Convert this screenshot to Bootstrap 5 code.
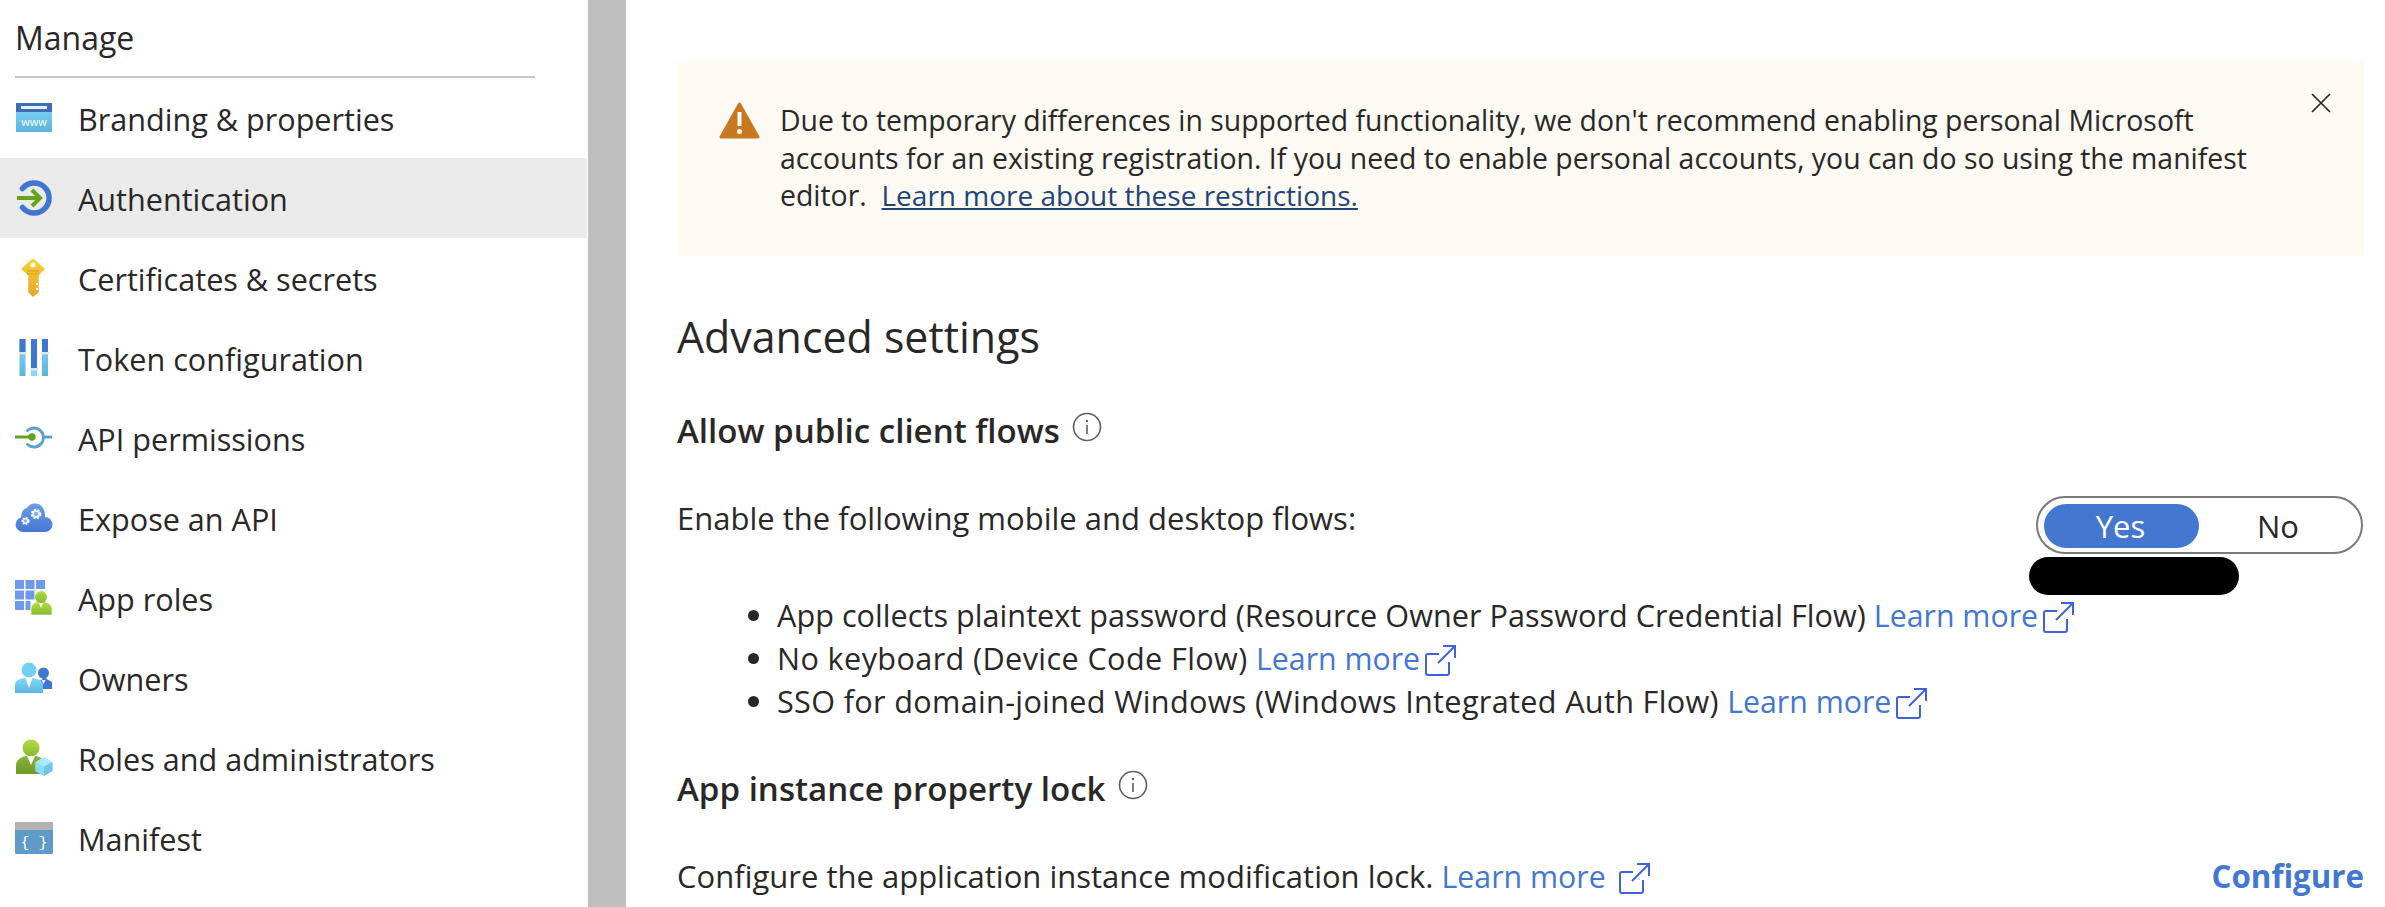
<!DOCTYPE html>
<html lang="en">
<head>
    <meta charset="UTF-8">
    <title>Authentication</title>
    <link href="https://cdn.jsdelivr.net/npm/bootstrap@5.3.0/dist/css/bootstrap.min.css" rel="stylesheet">
    <style>
        html, body { height: 907px; overflow: hidden; }
        body { font-family: "Open Sans", "Liberation Sans", sans-serif; font-size: 31px; color: #292827; background: #fff; }
        a { color: #4477d0; text-decoration: none; }
        .page-wrap { height: 907px; }
        .side-menu { width: 587px; flex: none; }
        .side-title { margin: 0 52px 0 15px; height: 78px; line-height: 76px; font-size: 32px; font-weight: 500; color: #292827; border-bottom: 2px solid #c8c8c8; }
        .side-item { height: 80px; padding: 0 0 0 15px; gap: 25px; border: 0; border-radius: 0; font-size: 30.6px; color: #292827; background: transparent; }
        .side-item span { position: relative; top: 2px; }
        .side-item.picked { background: #ebeaea; }
        .side-item svg { width: 38px; height: 38px; flex: none; }
        .split-bar { width: 38px; margin-left: 1px; background: #bebebe; flex: none; }
        .main-pane { width: 1759px; padding: 60px 21px 0 51px; flex: none; }
        .warn-box { height: 196px; margin: 0; padding: 42px 0 0 42px; gap: 20px; border: 0; border-radius: 4px; background: #fdf9f3; color: #292827; font-size: 28.4px; line-height: 37.5px; white-space: nowrap; }
        .warn-box a { color: #1f4479; font-size: 28px; text-decoration: underline; }
        .warn-icon { width: 41px; height: 37px; flex: none; }
        .warn-close { width: 22px; height: 22px; margin: -10.5px 32px 0 auto; flex: none; }
        .big-head { margin: 53px 0 0; font-size: 42.9px; line-height: 56px; font-weight: 400; color: #292827; }
        .sub-head { margin: 44px 0 0; font-size: 33.1px; line-height: 44px; font-weight: 600; color: #292827; }
        .sub-head svg { width: 30px; height: 30px; margin: -14px 0 0 4px; }
        .flow-row { margin-top: 43px; line-height: 43px; }
        .flow-text { margin-top: 1px; }
        .flow-list { margin: -1px 0 0; padding-left: 100px; font-size: 30.6px; line-height: 43px; white-space: nowrap; }
        .flow-list a, .flow-text a { font-size: 30.3px; letter-spacing: 0; }
        .flow-list li:nth-child(1) { letter-spacing: .04px; }
        .flow-list li:nth-child(2) { letter-spacing: .4px; }
        .flow-list li:nth-child(3) { letter-spacing: .34px; }
        .ext-icon { width: 32px; height: 32px; margin-left: 4px; vertical-align: -6px; }
        .yes-no { width: 327px; height: 58px; padding: 6px; border: 2px solid #7a7a7a; border-radius: 29px; margin-right: 1px; }
        .yes-no .btn { height: 44px; width: 155px; padding: 0; font-size: 31px; line-height: 44px; border: 0; border-radius: 22px; }
        .yes-no .btn-primary { background: #4477d0; color: #fff; padding-right: 2px; }
        .yes-no .btn-light { background: transparent; color: #292827; flex-grow: 1; padding-left: 2px; }
        .hidden-blob { width: 210px; height: 38px; margin: 3px 0 0 -7px; border-radius: 19px; background: #000; }
        .blue-strong { font-weight: 700; font-size: 31.3px; color: #4477d0; margin-top: 1px; }
        .last-row { margin-top: 43px; }
    </style>
</head>
<body>
<svg width="0" height="0" class="position-absolute">
    <defs>
        <linearGradient id="gLight" x1="0" y1="0" x2="0" y2="1"><stop offset="0" stop-color="#80d8f8"/><stop offset="1" stop-color="#5cb4dc"/></linearGradient>
        <linearGradient id="gCloud" x1="0" y1="0" x2="0" y2="1"><stop offset="0" stop-color="#6f9eea"/><stop offset="1" stop-color="#4477d4"/></linearGradient>
        <linearGradient id="gGreen" x1="0" y1="0" x2="0" y2="1"><stop offset="0" stop-color="#b6dc48"/><stop offset="1" stop-color="#86ba2e"/></linearGradient>
        <linearGradient id="gOlive" x1="0" y1="0" x2="0" y2="1"><stop offset="0" stop-color="#8cb43a"/><stop offset="1" stop-color="#6f9a28"/></linearGradient>
        <linearGradient id="gKey" x1="0" y1="0" x2="0" y2="1"><stop offset="0" stop-color="#f9d233"/><stop offset="1" stop-color="#e7a52c"/></linearGradient>
        <symbol id="extLink" viewBox="0 0 32 32">
            <path d="M15 10H4a2 2 0 0 0-2 2v17a2 2 0 0 0 2 2h19a2 2 0 0 0 2-2V18" fill="none" stroke="#3f62d8" stroke-width="2"/>
            <path d="M14 19 31 2M19 2h12v12" fill="none" stroke="#3f62d8" stroke-width="2"/>
        </symbol>
        <symbol id="infoDot" viewBox="0 0 30 30">
            <circle cx="15" cy="15" r="13.5" fill="none" stroke="#605e5c" stroke-width="1.6"/>
            <path d="M15 13v9" stroke="#605e5c" stroke-width="1.6"/><circle cx="15" cy="9" r="1.2" fill="#605e5c"/>
        </symbol>
    </defs>
</svg>
<div class="page-wrap d-flex">
    <aside class="side-menu">
        <div class="side-title">Manage</div>
        <div class="list-group">
            <a href="#" class="list-group-item side-item d-flex align-items-center">
                <svg viewBox="0 0 38 38"><rect x="1" y="4" width="36" height="29" fill="url(#gLight)"/><rect x="1" y="4" width="36" height="9" fill="#3d6cb5"/><rect x="6" y="7" width="26" height="3" fill="#e8eef6"/><text x="19" y="27" font-size="11" fill="#fff" text-anchor="middle" font-family="Open Sans">www</text></svg>
                <span>Branding &amp; properties</span>
            </a>
            <a href="#" class="list-group-item side-item picked d-flex align-items-center">
                <svg viewBox="0 0 38 38"><path d="M7.500 9.500A15 15 0 1 1 7.500 28.500" fill="none" stroke="#4076cf" stroke-width="5.500" stroke-linecap="round"/><path d="M2 19h23M17 11l8 8-8 8" fill="none" stroke="#65a31c" stroke-width="4"/></svg>
                <span>Authentication</span>
            </a>
            <a href="#" class="list-group-item side-item d-flex align-items-center">
                <svg viewBox="0 0 38 38"><path d="M18 0l11 10-6 6v17l-5 4-4-4V16L7 10z" fill="url(#gKey)" stroke="url(#gKey)" stroke-width="1.500" stroke-linejoin="round"/><circle cx="18" cy="6" r="2.500" fill="#fff"/><path d="M12 12h12M12 15h12" stroke="#e5a72c" stroke-width="1.300"/><path d="M23 24h-2v2h2M23 29h-2v2h2" fill="#fff"/></svg>
                <span>Certificates &amp; secrets</span>
            </a>
            <a href="#" class="list-group-item side-item d-flex align-items-center">
                <svg viewBox="0 0 38 38"><rect x="4.500" width="6" height="37" fill="url(#gLight)"/><rect x="16" width="6" height="37" fill="#80daf8"/><rect x="27" width="6" height="37" fill="url(#gLight)"/><rect x="4.500" width="6" height="14" fill="#4076cf"/><rect x="16" width="6" height="30" fill="#4076cf"/><rect x="27" width="6" height="14" fill="#4076cf"/><rect x="3.500" y="13" width="8" height="2.500" fill="#e4e4e4"/><rect x="15" y="29" width="8" height="2.500" fill="#e4e4e4"/><rect x="26" y="13" width="8" height="2.500" fill="#e4e4e4"/></svg>
                <span>Token configuration</span>
            </a>
            <a href="#" class="list-group-item side-item d-flex align-items-center">
                <svg viewBox="0 0 38 38"><path d="M12.500 11.500A9.500 9.500 0 1 1 12.500 25.500" fill="none" stroke="#5ea0cf" stroke-width="3" stroke-linecap="round"/><path d="M27 18h10" stroke="#5ea0cf" stroke-width="3"/><path d="M0 18h17" stroke="#65a31c" stroke-width="3"/><circle cx="17" cy="18" r="3.700" fill="#65a31c"/></svg>
                <span>API permissions</span>
            </a>
            <a href="#" class="list-group-item side-item d-flex align-items-center">
                <svg viewBox="0 0 38 38"><path d="M8 33a7.500 7.500 0 0 1-2-14.700C7 12 8 10 12 9c2-5 12-7 16 0 2 3 2 6 2 9a7.500 7.500 0 0 1 0 15z" fill="url(#gCloud)"/><circle cx="21" cy="15" r="4" fill="#dfe9fb" stroke="#fff" stroke-width="2.400" stroke-dasharray="2 1.300"/><circle cx="21" cy="15" r="2" fill="#7fa6e8"/><circle cx="10.500" cy="22" r="3" fill="#dfe9fb" stroke="#fff" stroke-width="2" stroke-dasharray="1.700 1.100"/><circle cx="10.500" cy="22" r="1.400" fill="#7fa6e8"/></svg>
                <span>Expose an API</span>
            </a>
            <a href="#" class="list-group-item side-item d-flex align-items-center">
                <svg viewBox="0 0 38 38"><path d="M0 1h9v9H0zM10.500 1h9v9h-9zM21 1h9v9h-9zM0 11.500h9v9H0zM10.500 11.500h9v9h-9zM0 22h9v9H0zM10.500 22h5v9h-5z" fill="#6f9aea"/><path d="M16 36v-6c0-4 3-6 5-7h10c3 1 6 3 6 7v6z" fill="url(#gGreen)" stroke="#fff" stroke-width=".6"/><circle cx="26" cy="18" r="6" fill="url(#gGreen)"/><path d="M24 24h4l-2 5z" fill="#fff"/></svg>
                <span>App roles</span>
            </a>
            <a href="#" class="list-group-item side-item d-flex align-items-center">
                <svg viewBox="0 0 38 38"><path d="M24 30v-8c2-1 3-1 4-3h3c1 2 3 2 6 4v7z" fill="#4076cf"/><circle cx="28.500" cy="14" r="5.500" fill="#4076cf"/><path d="M26.500 21h4l-2 4z" fill="#fff"/><path d="M0 34v-8c0-4 4-6 9-7h10c4 1 9 3 9 7v8z" fill="url(#gLight)"/><circle cx="14" cy="11" r="7.500" fill="#74d0f2"/><path d="M10.500 19h7L14 29z" fill="#fff"/></svg>
                <span>Owners</span>
            </a>
            <a href="#" class="list-group-item side-item d-flex align-items-center">
                <svg viewBox="0 0 38 38"><path d="M1 35v-9c0-5 5-8 10-9h10c5 1 9 4 9 9v9z" fill="url(#gOlive)"/><circle cx="16" cy="9" r="8.500" fill="url(#gGreen)"/><path d="M12 17h8l-4 9z" fill="#fff"/><path d="M29 18l8.500 5v9L29 37l-8.500-5v-9z" fill="#a8ebfc"/><path d="M29 27.500l8.500-4.500v9L29 37z" fill="#6fc6e6"/><path d="M29 27.500l-8.500-4.500v9L29 37z" fill="#8edcf4"/></svg>
                <span>Roles and administrators</span>
            </a>
            <a href="#" class="list-group-item side-item d-flex align-items-center">
                <svg viewBox="0 0 38 38"><rect y="3" width="38" height="32" rx="1" fill="#5f9bc9"/><path d="M0 4a1 1 0 0 1 1-1h37v8H0z" fill="#b2b2b2"/><text x="19" y="28" font-size="15" fill="#fff" text-anchor="middle" font-family="Liberation Mono">{ }</text></svg>
                <span>Manifest</span>
            </a>
        </div>
    </aside>
    <div class="split-bar"></div>
    <main class="main-pane">
        <div class="alert warn-box d-flex align-items-start" role="alert">
            <svg class="warn-icon" viewBox="0 0 41 37"><path d="M20.500 2 39 35H2z" fill="#c8781f" stroke="#c8781f" stroke-width="3" stroke-linejoin="round"/><path d="M20.500 10v14" stroke="#fff" stroke-width="4"/><circle cx="20.500" cy="29.500" r="2.500" fill="#fff"/></svg>
            <div>Due to temporary differences in supported functionality, we don't recommend enabling personal Microsoft<br>accounts for an existing registration. If you need to enable personal accounts, you can do so using the manifest<br>editor.&nbsp; <a href="#">Learn more about these restrictions.</a></div>
            <svg class="warn-close" viewBox="0 0 22 22"><path d="M2 2l18 18M20 2 2 20" stroke="#292827" stroke-width="1.700"/></svg>
        </div>
        <h2 class="big-head">Advanced settings</h2>
        <h3 class="sub-head">Allow public client flows <svg><use href="#infoDot"/></svg></h3>
        <div class="flow-row d-flex justify-content-between align-items-start">
            <span class="flow-text">Enable the following mobile and desktop flows:</span>
            <div>
                <div class="yes-no d-flex">
                    <button type="button" class="btn btn-primary">Yes</button>
                    <button type="button" class="btn btn-light">No</button>
                </div>
                <div class="hidden-blob"></div>
            </div>
        </div>
        <ul class="flow-list">
            <li>App collects plaintext password (Resource Owner Password Credential Flow) <a href="#">Learn more<svg class="ext-icon"><use href="#extLink"/></svg></a></li>
            <li>No keyboard (Device Code Flow) <a href="#">Learn more<svg class="ext-icon"><use href="#extLink"/></svg></a></li>
            <li>SSO for domain-joined Windows (Windows Integrated Auth Flow) <a href="#">Learn more<svg class="ext-icon"><use href="#extLink"/></svg></a></li>
        </ul>
        <h3 class="sub-head">App instance property lock <svg><use href="#infoDot"/></svg></h3>
        <div class="flow-row last-row d-flex justify-content-between">
            <span class="flow-text">Configure the application instance modification lock. <a href="#">Learn more <svg class="ext-icon"><use href="#extLink"/></svg></a></span>
            <a href="#" class="blue-strong">Configure</a>
        </div>
    </main>
</div>
<script src="https://cdn.jsdelivr.net/npm/bootstrap@5.3.0/dist/js/bootstrap.bundle.min.js"></script>
</body>
</html>
